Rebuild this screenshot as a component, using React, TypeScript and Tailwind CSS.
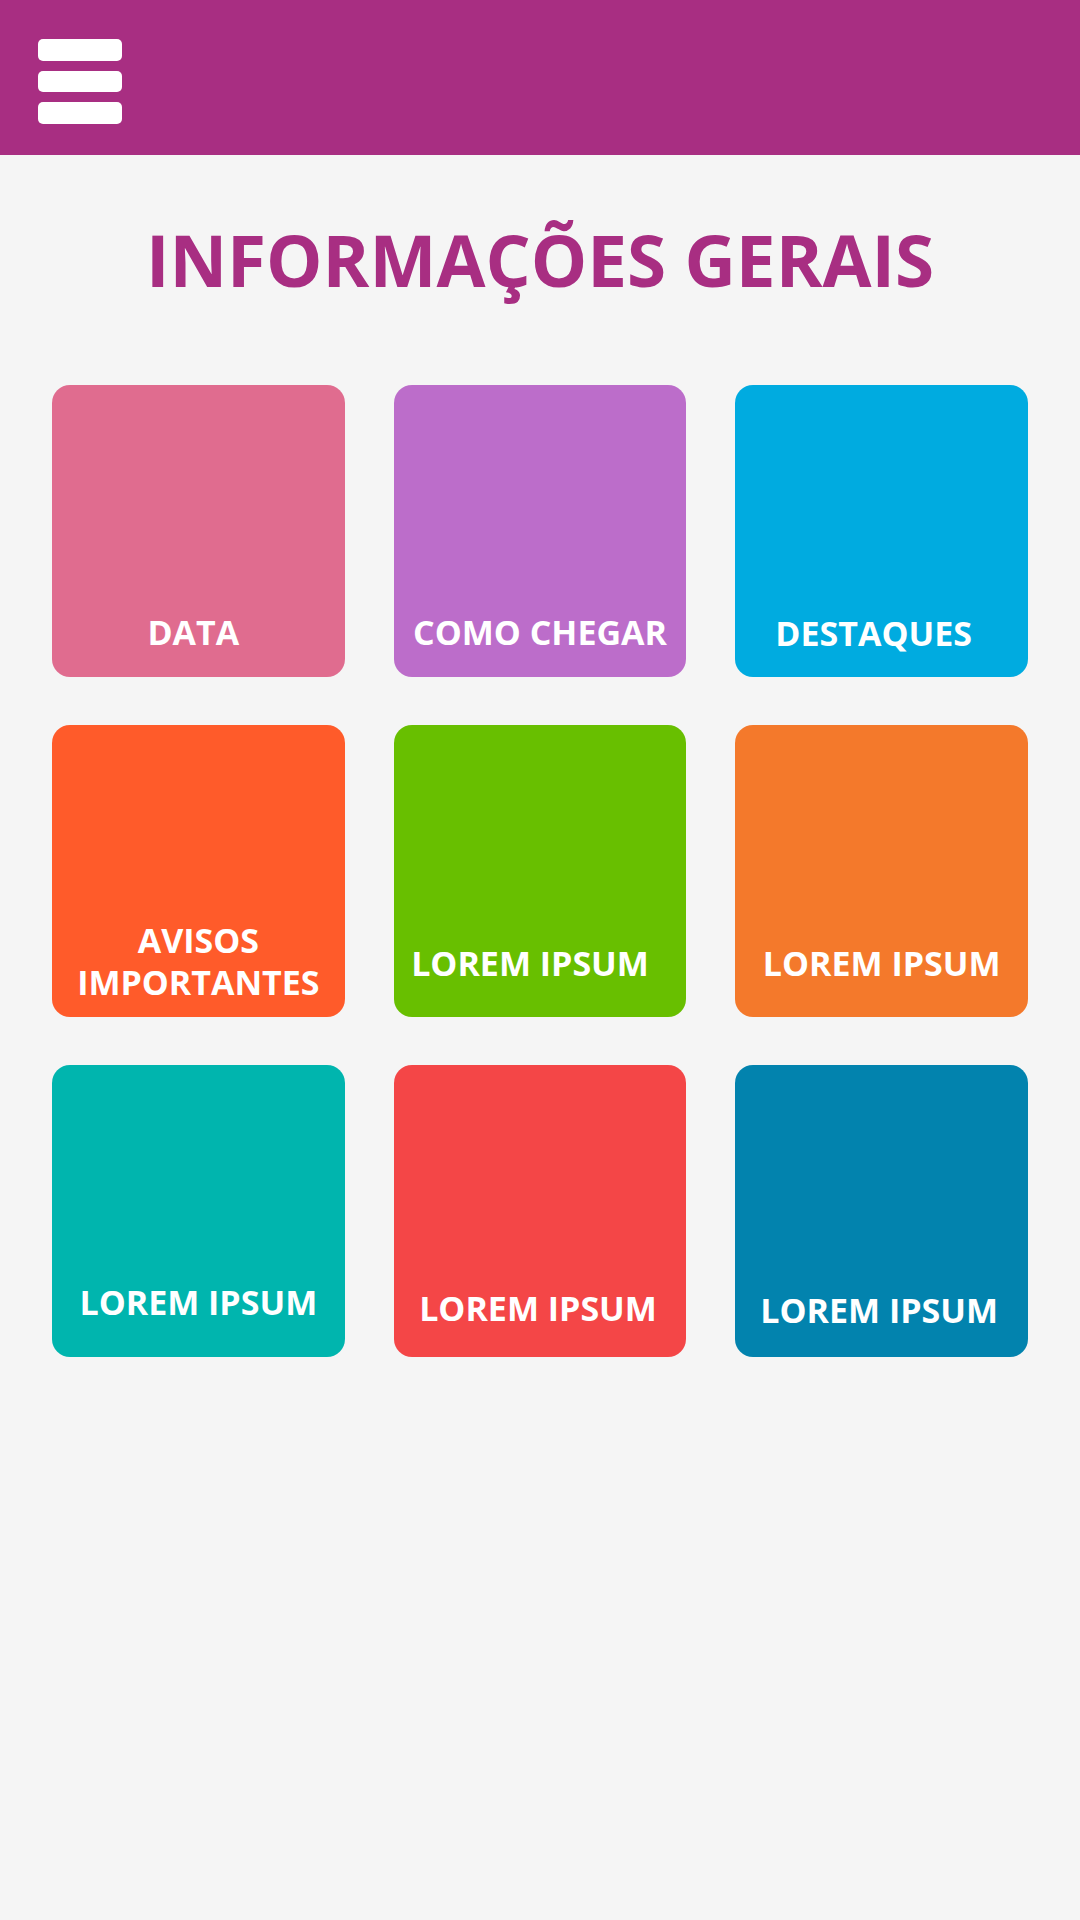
const tiles = [
  { label: 'DATA', bg: 'bg-[#e06c8f]', pad: 'pb-[24px] pr-[10px]' },
  { label: 'COMO CHEGAR', bg: 'bg-[#bc6dca]', pad: 'pb-[24px]' },
  { label: 'DESTAQUES', bg: 'bg-[#00abe0]', pad: 'pb-[23px] pr-[16px]' },
  { label: 'AVISOS IMPORTANTES', bg: 'bg-[#ff5b2a]', pad: 'pb-[14px] px-[30px]' },
  { label: 'LOREM IPSUM', bg: 'bg-[#68bf00]', pad: 'pb-[33px] pr-[20px]' },
  { label: 'LOREM IPSUM', bg: 'bg-[#f4792b]', pad: 'pb-[33px]' },
  { label: 'LOREM IPSUM', bg: 'bg-[#00b5ae]', pad: 'pb-[34px]' },
  { label: 'LOREM IPSUM', bg: 'bg-[#f44647]', pad: 'pb-[28px] pr-[4px]' },
  { label: 'LOREM IPSUM', bg: 'bg-[#0283ae]', pad: 'pb-[26px] pr-[5px]' },
]

export default function App() {
  return (
    <div className="min-h-[1920px] bg-[#f5f5f5] font-['Open_Sans',sans-serif]">
      <header className="h-[155px] bg-[#a82e82] pl-[38px] pt-[39px]">
        <button className="flex flex-col gap-[10px]">
          <span className="block h-[22px] w-[84px] rounded-[5px] bg-white" />
          <span className="block h-[21px] w-[84px] rounded-[5px] bg-white" />
          <span className="block h-[22px] w-[84px] rounded-[5px] bg-white" />
        </button>
      </header>

      <h1 className="mt-[57px] text-center text-[71px] font-bold leading-[96px] text-[#a82e82]">
        INFORMAÇÕES GERAIS
      </h1>

      <div className="mt-[77px] grid grid-cols-3 gap-x-[49px] gap-y-[48px] px-[52px]">
        {tiles.map((tile, i) => (
          <a
            key={i}
            href="#"
            className={`flex h-[292px] flex-col items-center justify-end rounded-[18px] ${tile.bg} ${tile.pad}`}
          >
            <span className="text-center text-[34px] font-bold leading-[42px] text-white">
              {tile.label}
            </span>
          </a>
        ))}
      </div>
    </div>
  )
}
